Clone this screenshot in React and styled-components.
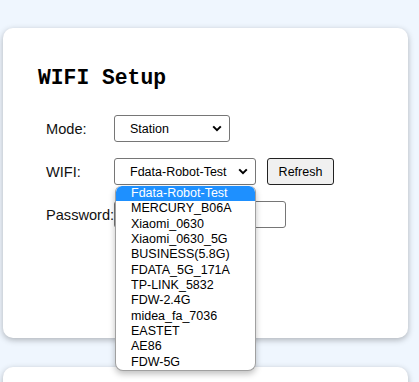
import React from "react";
import styled, { createGlobalStyle } from "styled-components";

const Global = createGlobalStyle`
  html, body { margin: 0; padding: 0; background: #eff6fe; }
  body { font-family: "Liberation Sans", Arial, sans-serif; color: #111; overflow: hidden; }
`;

const Page = styled.div`
  display: flex;
  flex-direction: column;
  gap: 29px;
  padding: 28px 11px 0 3px;
`;

const Card = styled.section`
  position: relative;
  background: #fff;
  border-radius: 10px;
  box-shadow: 0 2px 6px rgba(0, 0, 0, 0.28);
  height: ${(p) => p.$h}px;
  padding: 38px 0 0 35px;
  box-sizing: border-box;
`;

const Title = styled.h2`
  margin: 0 0 25px;
  font-family: "Liberation Mono", "Courier New", monospace;
  font-weight: bold;
  font-size: 21.33px;
  line-height: 24px;
  color: #000;
`;

const Form = styled.div`
  display: grid;
  grid-template-columns: 68px auto;
  row-gap: 16px;
  margin-left: 8px;
  align-items: center;
`;

const Label = styled.label`
  font-size: 14.6px;
  color: #111;
`;

const Controls = styled.div`
  position: relative;
  display: flex;
  align-items: center;
  gap: 11px;
`;

const SelectBox = styled.div`
  box-sizing: border-box;
  width: ${(p) => p.$w}px;
  height: 27px;
  border: 1px solid #767676;
  border-radius: 3px;
  background: #fff;
  display: flex;
  align-items: center;
  justify-content: space-between;
  padding: 0 7px 0 15px;
  font-size: 12.5px;
  color: #000;
`;

const Chevron = () => (
  <svg width="10" height="7" viewBox="0 0 10 7" aria-hidden="true">
    <path d="M1.2 1.4 L5 5.2 L8.8 1.4" fill="none" stroke="#000" strokeWidth="2" />
  </svg>
);

const Button = styled.button`
  box-sizing: border-box;
  width: 67px;
  height: 27px;
  border: 1px solid #222;
  border-radius: 3px;
  background: #f0f0f0;
  font-family: "Liberation Sans", Arial, sans-serif;
  font-size: 12.5px;
  color: #000;
  padding: 0;
`;

const Input = styled.div`
  box-sizing: border-box;
  width: 172px;
  height: 27px;
  border: 1px solid #767676;
  border-radius: 3px;
  background: #fff;
`;

const Menu = styled.ul`
  position: absolute;
  left: 1px;
  top: 28px;
  width: 141px;
  margin: 0;
  padding: 0;
  list-style: none;
  background: #fff;
  border: 1px solid #a0a0a0;
  border-top: none;
  border-radius: 6px 6px 8px 8px;
  box-shadow: 0 3px 6px rgba(0, 0, 0, 0.25);
  box-sizing: border-box;
  overflow: hidden;
  z-index: 5;
`;

const Option = styled.li`
  height: 15.33px;
  line-height: 15.33px;
  padding-left: 15px;
  font-size: 12.5px;
  color: ${(p) => (p.$active ? "#fff" : "#000")};
  background: ${(p) => (p.$active ? "#1e90ff" : "transparent")};
  border-radius: ${(p) => (p.$active ? "6px 6px 0 0" : "0")};
`;

const networks = [
  "Fdata-Robot-Test",
  "MERCURY_B06A",
  "Xiaomi_0630",
  "Xiaomi_0630_5G",
  "BUSINESS(5.8G)",
  "FDATA_5G_171A",
  "TP-LINK_5832",
  "FDW-2.4G",
  "midea_fa_7036",
  "EASTET",
  "AE86",
  "FDW-5G",
];

export default function App() {
  return (
    <>
      <Global />
      <Page>
        <Card $h={310}>
          <Title>WIFI Setup</Title>
          <Form>
            <Label>Mode:</Label>
            <Controls>
              <SelectBox $w={116}>
                <span>Station</span>
                <Chevron />
              </SelectBox>
            </Controls>
            <Label>WIFI:</Label>
            <Controls>
              <SelectBox $w={142}>
                <span>Fdata-Robot-Test</span>
                <Chevron />
              </SelectBox>
              <Button>Refresh</Button>
              <Menu>
                {networks.map((n, i) => (
                  <Option key={n} $active={i === 0}>
                    {n}
                  </Option>
                ))}
              </Menu>
            </Controls>
            <Label>Password:</Label>
            <Controls>
              <Input />
            </Controls>
          </Form>
        </Card>
        <Card $h={14} />
      </Page>
    </>
  );
}
